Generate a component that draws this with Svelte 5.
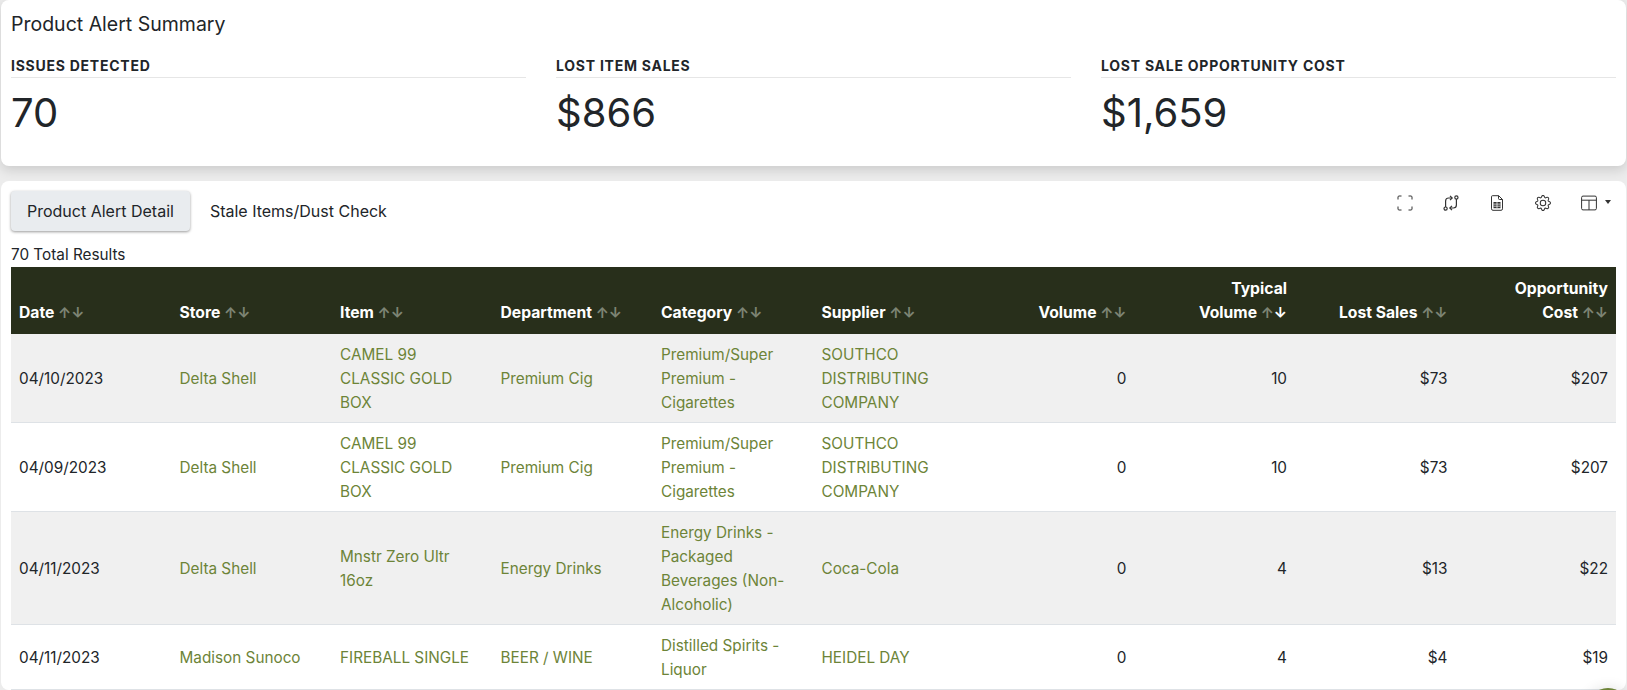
<script lang="ts">
    const stats = [
        { label: "Issues Detected", value: "70" },
        { label: "Lost Item Sales", value: "$866" },
        { label: "Lost Sale Opportunity Cost", value: "$1,659" }
    ];

    const columns = [
        { lines: ["Date"] },
        { lines: ["Store"] },
        { lines: ["Item"] },
        { lines: ["Department"] },
        { lines: ["Category"] },
        { lines: ["Supplier"] },
        { lines: ["Volume"], right: true },
        { lines: ["Typical", "Volume"], right: true, active: true },
        { lines: ["Lost Sales"], right: true },
        { lines: ["Opportunity", "Cost"], right: true }
    ];

    const rows = [
        ["04/10/2023", "Delta Shell", "CAMEL 99 CLASSIC GOLD BOX", "Premium Cig", "Premium/Super Premium - Cigarettes", "SOUTHCO DISTRIBUTING COMPANY", "0", "10", "$73", "$207"],
        ["04/09/2023", "Delta Shell", "CAMEL 99 CLASSIC GOLD BOX", "Premium Cig", "Premium/Super Premium - Cigarettes", "SOUTHCO DISTRIBUTING COMPANY", "0", "10", "$73", "$207"],
        ["04/11/2023", "Delta Shell", "Mnstr Zero Ultr 16oz", "Energy Drinks", "Energy Drinks - Packaged Beverages (Non-Alcoholic)", "Coca-Cola", "0", "4", "$13", "$22"],
        ["04/11/2023", "Madison Sunoco", "FIREBALL SINGLE", "BEER / WINE", "Distilled Spirits - Liquor", "HEIDEL DAY", "0", "4", "$4", "$19"]
    ];
</script>

<div class="page">
    <section class="card summary">
        <h1>Product Alert Summary</h1>
        <div class="stats">
            {#each stats as stat}
                <div class="stat">
                    <div class="stat-label">{stat.label}</div>
                    <div class="stat-value">{stat.value}</div>
                </div>
            {/each}
        </div>
    </section>

    <section class="card detail">
        <div class="topbar">
            <div class="tabs">
                <button class="tab active">Product Alert Detail</button>
                <button class="tab">Stale Items/Dust Check</button>
            </div>
            <div class="tools">
                <svg viewBox="0 0 16 16" class="tool line">
                    <path d="M1 4.500V2a1 1 0 0 1 1-1h2.500M11.500 1H14a1 1 0 0 1 1 1v2.500M15 11.500V14a1 1 0 0 1-1 1h-2.500M4.500 15H2a1 1 0 0 1-1-1v-2.500"/>
                </svg>
                <svg viewBox="0 0 16 16" class="tool line heavy">
                    <circle cx="13.400" cy="2.400" r="1.600"/>
                    <circle cx="2.600" cy="13.600" r="1.600"/>
                    <path d="M2.600 12V6c0-2 1.400-3 3-3H9"/>
                    <path d="M7 .9L9.200 3 7 5.100"/>
                    <path d="M13.400 4v6c0 2-1.400 3-3 3H7"/>
                    <path d="M9 10.900L6.800 13 9 15.100"/>
                </svg>
                <svg viewBox="0 0 16 16" class="tool line">
                    <path d="M3.500.7h6.200l3.800 3.800v9.300a1.500 1.500 0 0 1-1.500 1.500H4a1.500 1.500 0 0 1-1.500-1.500V1.700a1 1 0 0 1 1-1z"/>
                    <path d="M9.500.7v2.800a1 1 0 0 0 1 1h3"/>
                    <rect x="4.500" y="7" width="7" height="6.200" class="fill"/>
                    <path d="M4.500 9.100h7M4.500 11.200h7M8 7v6.200" class="gap"/>
                </svg>
                <svg viewBox="0 0 16 16" class="tool"><path d="M8 4.754a3.246 3.246 0 1 0 0 6.492 3.246 3.246 0 0 0 0-6.492zM5.754 8a2.246 2.246 0 1 1 4.492 0 2.246 2.246 0 0 1-4.492 0z"/><path d="M9.796 1.343c-.527-1.79-3.065-1.79-3.592 0l-.094.319a.873.873 0 0 1-1.255.52l-.292-.16c-1.64-.892-3.433.902-2.54 2.541l.159.292a.873.873 0 0 1-.52 1.255l-.319.094c-1.79.527-1.79 3.065 0 3.592l.319.094a.873.873 0 0 1 .52 1.255l-.16.292c-.892 1.64.901 3.434 2.541 2.54l.292-.159a.873.873 0 0 1 1.255.52l.094.319c.527 1.79 3.065 1.79 3.592 0l.094-.319a.873.873 0 0 1 1.255-.52l.292.16c1.64.893 3.434-.902 2.54-2.541l-.159-.292a.873.873 0 0 1 .52-1.255l.319-.094c1.79-.527 1.79-3.065 0-3.592l-.319-.094a.873.873 0 0 1-.52-1.255l.16-.292c.893-1.64-.902-3.433-2.541-2.54l-.292.159a.873.873 0 0 1-1.255-.52l-.094-.319zm-2.633.283c.246-.835 1.428-.835 1.674 0l.094.319a1.873 1.873 0 0 0 2.693 1.115l.291-.16c.764-.415 1.6.42 1.184 1.185l-.159.292a1.873 1.873 0 0 0 1.116 2.692l.318.094c.835.246.835 1.428 0 1.674l-.319.094a1.873 1.873 0 0 0-1.115 2.693l.16.291c.415.764-.42 1.6-1.185 1.184l-.291-.159a1.873 1.873 0 0 0-2.693 1.116l-.094.318c-.246.835-1.428.835-1.674 0l-.094-.319a1.873 1.873 0 0 0-2.692-1.115l-.292.16c-.764.415-1.6-.42-1.184-1.185l.159-.291A1.873 1.873 0 0 0 1.945 8.93l-.319-.094c-.835-.246-.835-1.428 0-1.674l.319-.094A1.873 1.873 0 0 0 3.06 4.377l-.16-.292c-.415-.764.42-1.6 1.185-1.184l.292.159a1.873 1.873 0 0 0 2.692-1.115l.094-.319z"/></svg>
                <span class="layout-tool">
                    <svg viewBox="0 0 16 16" class="tool line">
                        <rect x=".6" y="1.100" width="14.800" height="13.800" rx="1.400"/>
                        <path d="M.6 5.200h14.800M8 5.200v9.700"/>
                    </svg>
                    <i class="caret"></i>
                </span>
            </div>
        </div>

        <div class="total">70 Total Results</div>

        <table>
            <thead>
                <tr>
                    {#each columns as col}
                        <th class:right={col.right}>
                            {#each col.lines as line, i}
                                {#if i > 0}<br />{/if}{line}
                            {/each}
                            <span class="sort"><span class="arrow">↑</span><span class="arrow" class:on={col.active}>↓</span></span>
                        </th>
                    {/each}
                </tr>
            </thead>
            <tbody>
                {#each rows as row}
                    <tr>
                        {#each row as cell, i}
                            <td class:link={i >= 1 && i <= 5} class:right={i > 5}>{cell}</td>
                        {/each}
                    </tr>
                {/each}
            </tbody>
        </table>
    </section>

    <div class="chat"></div>
</div>

<style>
    :global(body) {
        margin: 0;
        background: #ececec;
        font-family: Inter, "Liberation Sans", sans-serif;
        color: #212529;
    }

    .page {
        height: 690px;
        overflow: hidden;
        position: relative;
        display: flex;
        flex-direction: column;
        gap: 15px;
        padding: 0 1px;
        box-sizing: border-box;
    }

    .card {
        background: #fff;
        border-radius: 8px;
        padding: 0 10px;
    }

    .summary {
        height: 166px;
        flex: none;
        box-sizing: border-box;
        box-shadow: 0 4px 12px rgba(0, 0, 0, 0.14);
    }

    h1 {
        margin: 0;
        padding-top: 12px;
        font-size: 19.5px;
        font-weight: 400;
        line-height: 24px;
    }

    .stats {
        display: grid;
        grid-template-columns: repeat(3, 1fr);
        gap: 30px;
        margin-top: 21px;
    }

    .stat-label {
        font-size: 14px;
        font-weight: 700;
        line-height: 17px;
        padding-bottom: 3px;
        letter-spacing: 0.75px;
        text-transform: uppercase;
        border-bottom: 1px solid #e6e6e6;
    }

    .stat-value {
        font-size: 40px;
        line-height: 48px;
        margin-top: 11px;
    }

    .detail {
        flex: 1;
    }

    .topbar {
        display: flex;
        justify-content: space-between;
        align-items: flex-start;
        padding-top: 10px;
    }

    .tabs {
        display: flex;
        gap: 4px;
    }

    .tab {
        height: 40px;
        padding: 0 16px;
        border: none;
        background: none;
        border-radius: 4px;
        font: 400 16px Inter, "Liberation Sans", sans-serif;
        color: #212529;
    }

    .tab.active {
        background: #e9ecef;
        box-shadow: 0 1px 3px rgba(0, 0, 0, 0.4);
    }

    .tools {
        display: flex;
        align-items: center;
        gap: 30px;
        padding-right: 5px;
        height: 24px;
    }

    .tool {
        width: 16px;
        height: 16px;
        fill: #333;
        display: block;
    }

    .line {
        fill: none;
        stroke: #333;
        stroke-width: 1;
    }

    .heavy {
        stroke-width: 1.2;
    }

    .line .fill {
        fill: #333;
        stroke: none;
    }

    .line .gap {
        stroke: #fff;
        stroke-width: 0.7;
    }

    .layout-tool {
        display: flex;
        align-items: center;
        gap: 8px;
    }

    .caret {
        border-left: 3.5px solid transparent;
        border-right: 3.5px solid transparent;
        border-top: 4px solid #333;
        margin-bottom: 2px;
    }

    .total {
        font-size: 15.3px;
        line-height: 20px;
        margin-top: 14px;
        height: 22px;
    }

    table {
        width: 100%;
        border-collapse: collapse;
        table-layout: fixed;
        font-size: 15.3px;
        line-height: 24px;
    }

    th {
        background: #282f1b;
        color: #fff;
        font-weight: 700;
        font-size: 15.7px;
        text-align: left;
        vertical-align: bottom;
        padding: 8px 8px 9px;
        line-height: 24px;
        height: 50px;
    }

    th.right,
    td.right {
        text-align: right;
    }

    .sort {
        white-space: nowrap;
        font-size: 14.5px;
    }

    .arrow {
        color: #7d8474;
    }

    .arrow.on {
        color: #fff;
    }

    td {
        padding: 9px 8px 7px;
        vertical-align: middle;
        border-bottom: 1px solid #dee2e6;
        overflow-wrap: break-word;
    }

    tbody tr:nth-child(odd) td {
        background: #f0f0f0;
    }

    td.link {
        color: #6d8438;
    }

    .chat {
        position: absolute;
        left: 1586px;
        top: 688px;
        width: 44px;
        height: 44px;
        border-radius: 50%;
        background: #6d8438;
        box-shadow: 0 0 14px rgba(0, 0, 0, 0.12);
    }
</style>
